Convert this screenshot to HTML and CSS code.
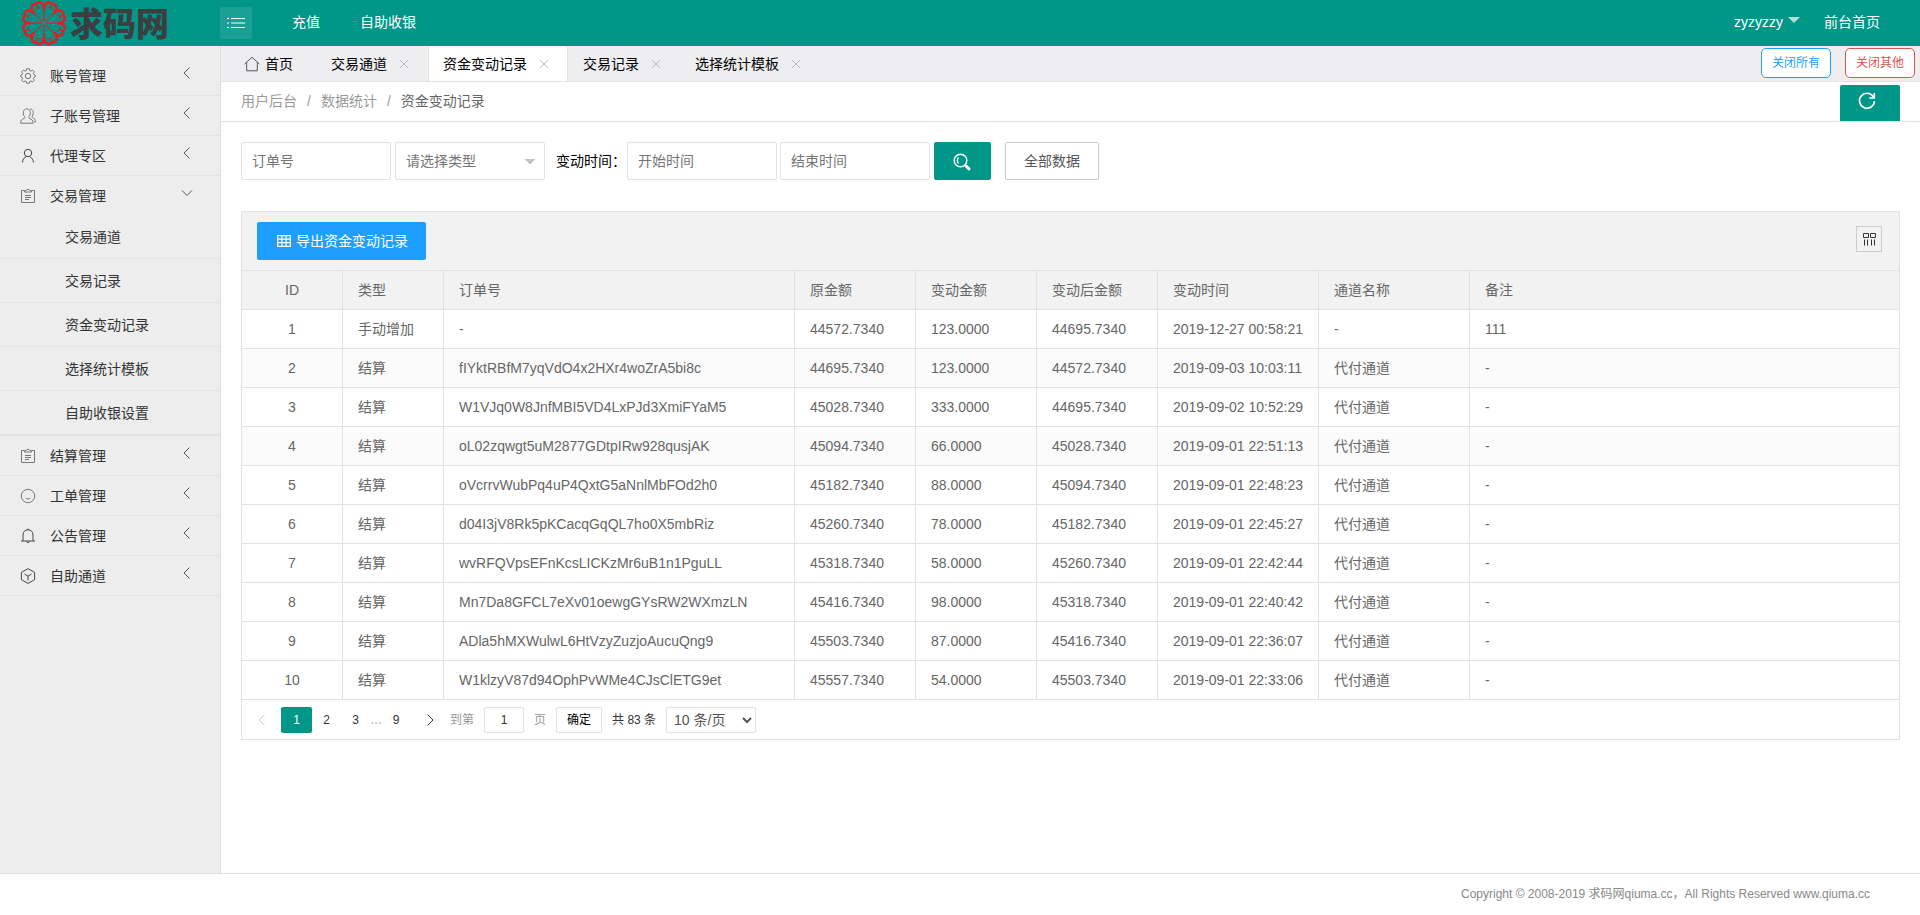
FILE: index.html
```
<!DOCTYPE html>
<html lang="zh-CN">
<head>
    <meta charset="UTF-8">
    <meta name="viewport" content="width=device-width, initial-scale=1.0">
    <title>资金变动记录</title>
    <link rel="stylesheet" href="styles.css">
</head>
<body>
    <svg class="sprite" aria-hidden="true">
        <symbol id="left" viewBox="0 0 14 14"><path d="M9.5 1.5L4 7l5.500 5.500"/></symbol>
        <symbol id="right" viewBox="0 0 14 14"><path d="M4.500 1.500L10 7l-5.500 5.500"/></symbol>
        <symbol id="down" viewBox="0 0 14 14"><path d="M2 4.500L7 9.500l5-5"/></symbol>
        <symbol id="close" viewBox="0 0 14 14"><path d="M3 3l8 8M11 3l-8 8"/></symbol>
        <symbol id="form" viewBox="0 0 16 16"><path d="M4 2.500H1.500v12h13v-12H12M4.500 4V2.500H6C6.300 1 9.700 1 10 2.500h1.500V4zM5 7.500h6M5 9.500h6M5 11.500h4"/></symbol>
        <symbol id="petal" viewBox="-9 -24 18 24" overflow="visible"><path d="M-4.800-12.500C-8-17-5.500-21.500-1.800-21.300Q-.6-21.200 0-20.500Q.6-21.200 1.800-21.300C5.500-21.500 8-17 4.800-12.500"/><path class="vein" d="M-4.800-12.500L-.8-2M4.800-12.500L.8-2"/><path class="curl" d="M0-20.500C.5-17-1-15-3-16.500M0-20.500C-.5-17 1-15 3-16.500"/></symbol>
    </svg>

    <header class="header">
        <a class="logo" href="#">
            <svg class="logo-flower" viewBox="-23 -23 46 46">
                <g transform="rotate(22.5)"><use href="#petal" x="-9" y="-24" width="18" height="24"/></g>
                <g transform="rotate(67.5)"><use href="#petal" x="-9" y="-24" width="18" height="24"/></g>
                <g transform="rotate(112.5)"><use href="#petal" x="-9" y="-24" width="18" height="24"/></g>
                <g transform="rotate(157.5)"><use href="#petal" x="-9" y="-24" width="18" height="24"/></g>
                <g transform="rotate(202.5)"><use href="#petal" x="-9" y="-24" width="18" height="24"/></g>
                <g transform="rotate(247.5)"><use href="#petal" x="-9" y="-24" width="18" height="24"/></g>
                <g transform="rotate(292.5)"><use href="#petal" x="-9" y="-24" width="18" height="24"/></g>
                <g transform="rotate(337.5)"><use href="#petal" x="-9" y="-24" width="18" height="24"/></g>
            </svg>
            <span>求码网</span>
        </a>
        <button class="menu-toggle" aria-label="菜单">
            <svg viewBox="0 0 18 12"><path d="M4 1.500h14M4 6h14M4 10.500h14M0 1.500h2M0 6h2M0 10.500h2"/></svg>
        </button>
        <nav class="top-nav">
            <a href="#">充值</a>
            <a href="#">自助收银</a>
        </nav>
        <nav class="user-nav">
            <a href="#">zyzyzzy <i class="caret"></i></a>
            <a href="#">前台首页</a>
        </nav>
    </header>

    <div class="wrapper">
        <!-- 左侧菜单 -->
        <aside class="side">
            <ul class="menu">
                <li><a class="menu-link" href="#">
                    <svg class="icon" viewBox="0 0 16 16"><circle cx="8" cy="8" r="2.700"/><path d="M6.700.7h2.600l.4 1.900 1.300.5 1.600-1 1.800 1.800-1 1.600.5 1.300 1.400.3v1.800l-1.400.4-.5 1.300 1 1.600-1.800 1.800-1.600-1-1.300.5-.4 1.800H6.700l-.4-1.800-1.300-.5-1.600 1-1.800-1.800 1-1.600-.5-1.300L.7 8.900V7.100l1.400-.3.5-1.300-1-1.600 1.800-1.800 1.600 1 1.300-.5z"/></svg>
                    账号管理<svg class="arrow"><use href="#left"/></svg></a></li>
                <li><a class="menu-link" href="#">
                    <svg class="icon" viewBox="0 0 16 16"><path d="M.6 15.200c0-3 1.200-4 3.900-4.900.6-.3.400-1.100 0-1.600C2.200 5.500 3.200.8 6.800.8s4.600 4.700 2.300 7.900c-.4.500-.6 1.300 0 1.600 2.700.9 3.900 1.900 3.900 4.900zM10 1c3.300 0 4.200 4.200 2.200 7.200-.4.600-.2 1 .4 1.300 2 .9 2.800 2.200 2.800 4.500h-1.200"/></svg>
                    子账号管理<svg class="arrow"><use href="#left"/></svg></a></li>
                <li><a class="menu-link" href="#">
                    <svg class="icon dark" viewBox="0 0 16 16"><circle cx="8" cy="5" r="3.700"/><path d="M2.500 14.500c.2-3.500 1.900-5.200 4-6M10 9c2 1 3.300 2.800 3.500 5.500"/></svg>
                    代理专区<svg class="arrow"><use href="#left"/></svg></a></li>
                <li class="open">
                    <a class="menu-link" href="#"><svg class="icon"><use href="#form"/></svg>交易管理<svg class="arrow"><use href="#down"/></svg></a>
                    <ul class="sub-menu">
                        <li><a href="#">交易通道</a></li>
                        <li><a href="#">交易记录</a></li>
                        <li><a href="#">资金变动记录</a></li>
                        <li><a href="#">选择统计模板</a></li>
                        <li><a href="#">自助收银设置</a></li>
                    </ul>
                </li>
                <li><a class="menu-link" href="#"><svg class="icon"><use href="#form"/></svg>结算管理<svg class="arrow"><use href="#left"/></svg></a></li>
                <li><a class="menu-link" href="#">
                    <svg class="icon" viewBox="0 0 16 16"><circle cx="8" cy="8" r="6.700"/><path d="M5.700 10.200c1.400 1 3.200 1 4.600 0"/></svg>
                    工单管理<svg class="arrow"><use href="#left"/></svg></a></li>
                <li><a class="menu-link" href="#">
                    <svg class="icon dark" viewBox="0 0 16 16"><path d="M1 13h14M3 13V7c0-3.300 2-5.200 5-5.200S13 3.700 13 7v6M6.500 13.300c.3 1.700 2.700 1.700 3 0M8 1.800V.6"/></svg>
                    公告管理<svg class="arrow"><use href="#left"/></svg></a></li>
                <li><a class="menu-link" href="#">
                    <svg class="icon dark" viewBox="0 0 16 16"><path d="M8 .7l6.600 3.700v7.400L8 15.400l-6.600-3.600V4.400zM4.500 6L8 8.200 11.500 6M8 8.200v4.300"/></svg>
                    自助通道<svg class="arrow"><use href="#left"/></svg></a></li>
            </ul>
        </aside>

        <main class="main">
            <!-- 标签页 -->
            <div class="tabs">
                <a class="tab home" href="#"><svg viewBox="0 0 16 16"><path d="M.7 8L8 1.200 15.300 8M2.700 6.500v8.300h10.600V6.500"/></svg>首页</a>
                <a class="tab" href="#">交易通道<svg><use href="#close"/></svg></a>
                <a class="tab active" href="#">资金变动记录<svg><use href="#close"/></svg></a>
                <a class="tab" href="#">交易记录<svg><use href="#close"/></svg></a>
                <a class="tab" href="#">选择统计模板<svg><use href="#close"/></svg></a>
                <div class="tab-tools">
                    <button class="close-all">关闭所有</button>
                    <button class="close-other">关闭其他</button>
                </div>
            </div>

            <div class="crumb-bar">
                <nav class="crumb">
                    <a href="#">用户后台</a><span>/</span><a href="#">数据统计</a><span>/</span><a class="current" href="#">资金变动记录</a>
                </nav>
                <button class="refresh" aria-label="刷新">
                    <svg viewBox="0 0 18 18"><path d="M15.500 5A7.500 7.500 0 1 0 16.500 9M16.300 1v5h-5"/></svg>
                </button>
            </div>

            <div class="content">
                <form class="search">
                    <input type="text" placeholder="订单号" aria-label="订单号">
                    <select class="type-select" aria-label="类型">
                        <option>请选择类型</option>
                    </select>
                    <label for="start">变动时间：</label>
                    <input type="text" id="start" placeholder="开始时间">
                    <input type="text" placeholder="结束时间" aria-label="结束时间">
                    <button class="search-btn" type="button" aria-label="搜索">
                        <svg viewBox="0 0 18 18"><circle cx="7.500" cy="7.500" r="6.300"/><path d="M5.500 4.500C4 6 4 9 5.500 10.500"/><path class="handle" d="M12.500 12.500l3.500 3.300"/></svg>
                    </button>
                    <button class="all-btn" type="button">全部数据</button>
                </form>

                <div class="table-box">
                    <div class="toolbar">
                        <button class="export-btn">
                            <svg viewBox="0 0 14 12"><path d="M.7.7h12.600v10.600H.7zM.7 4.200h12.600M.7 7.700h12.600M4.900.7v10.600M9.100.7v10.600"/></svg>导出资金变动记录
                        </button>
                        <button class="cols-btn" aria-label="筛选列">
                            <svg viewBox="0 0 14 14"><path d="M1.500 1.500h5v4h-5zM8.500 1.500h5v4h-5z"/><path d="M2.500 7.500v6M5.500 7.500v6M9.500 7.500v6M12.500 7.500v6"/></svg>
                        </button>
                    </div>
                    <table class="data">
                        <colgroup>
                            <col class="w-id"><col class="w-id"><col class="w-order"><col class="w-money"><col class="w-money"><col class="w-money"><col class="w-time"><col class="w-name"><col>
                        </colgroup>
                        <thead>
                            <tr><th>ID</th><th>类型</th><th>订单号</th><th>原金额</th><th>变动金额</th><th>变动后金额</th><th>变动时间</th><th>通道名称</th><th>备注</th></tr>
                        </thead>
                        <tbody>
                            <tr><td>1</td><td>手动增加</td><td>-</td><td>44572.7340</td><td>123.0000</td><td>44695.7340</td><td>2019-12-27 00:58:21</td><td>-</td><td>111</td></tr>
                            <tr><td>2</td><td>结算</td><td>fIYktRBfM7yqVdO4x2HXr4woZrA5bi8c</td><td>44695.7340</td><td>123.0000</td><td>44572.7340</td><td>2019-09-03 10:03:11</td><td>代付通道</td><td>-</td></tr>
                            <tr><td>3</td><td>结算</td><td>W1VJq0W8JnfMBI5VD4LxPJd3XmiFYaM5</td><td>45028.7340</td><td>333.0000</td><td>44695.7340</td><td>2019-09-02 10:52:29</td><td>代付通道</td><td>-</td></tr>
                            <tr><td>4</td><td>结算</td><td>oL02zqwgt5uM2877GDtpIRw928qusjAK</td><td>45094.7340</td><td>66.0000</td><td>45028.7340</td><td>2019-09-01 22:51:13</td><td>代付通道</td><td>-</td></tr>
                            <tr><td>5</td><td>结算</td><td>oVcrrvWubPq4uP4QxtG5aNnlMbFOd2h0</td><td>45182.7340</td><td>88.0000</td><td>45094.7340</td><td>2019-09-01 22:48:23</td><td>代付通道</td><td>-</td></tr>
                            <tr><td>6</td><td>结算</td><td>d04I3jV8Rk5pKCacqGqQL7ho0X5mbRiz</td><td>45260.7340</td><td>78.0000</td><td>45182.7340</td><td>2019-09-01 22:45:27</td><td>代付通道</td><td>-</td></tr>
                            <tr><td>7</td><td>结算</td><td>wvRFQVpsEFnKcsLICKzMr6uB1n1PguLL</td><td>45318.7340</td><td>58.0000</td><td>45260.7340</td><td>2019-09-01 22:42:44</td><td>代付通道</td><td>-</td></tr>
                            <tr><td>8</td><td>结算</td><td>Mn7Da8GFCL7eXv01oewgGYsRW2WXmzLN</td><td>45416.7340</td><td>98.0000</td><td>45318.7340</td><td>2019-09-01 22:40:42</td><td>代付通道</td><td>-</td></tr>
                            <tr><td>9</td><td>结算</td><td>ADla5hMXWulwL6HtVzyZuzjoAucuQng9</td><td>45503.7340</td><td>87.0000</td><td>45416.7340</td><td>2019-09-01 22:36:07</td><td>代付通道</td><td>-</td></tr>
                            <tr><td>10</td><td>结算</td><td>W1klzyV87d94OphPvWMe4CJsClETG9et</td><td>45557.7340</td><td>54.0000</td><td>45503.7340</td><td>2019-09-01 22:33:06</td><td>代付通道</td><td>-</td></tr>
                        </tbody>
                    </table>
                    <!-- 分页 -->
                    <div class="pager">
                        <a class="prev" href="#" aria-label="上一页"><svg><use href="#left"/></svg></a>
                        <a class="on" href="#">1</a>
                        <a href="#">2</a>
                        <a href="#">3</a>
                        <span class="dots">…</span>
                        <a class="last" href="#">9</a>
                        <a class="next" href="#" aria-label="下一页"><svg><use href="#right"/></svg></a>
                        <label for="page">到第</label>
                        <input type="text" id="page" value="1">
                        <label for="page">页</label>
                        <button>确定</button>
                        <span class="count">共 83 条</span>
                        <select aria-label="每页条数">
                            <option>10 条/页</option>
                        </select>
                    </div>
                </div>
            </div>
        </main>
    </div>

    <footer class="footer">Copyright © 2008-2019 求码网qiuma.cc，All Rights Reserved www.qiuma.cc</footer>
</body>
</html>
```
FILE: styles.css
```
* {
    box-sizing: border-box;
}
body {
    margin: 0;
    min-height: 100vh;
    display: flex;
    flex-direction: column;
    font: 14px/24px "Liberation Sans", "Noto Sans CJK SC", sans-serif;
    color: #000;
    background: #fff;
}
a {
    color: inherit;
    text-decoration: none;
}
ul {
    list-style: none;
    margin: 0;
    padding: 0;
}
button, input, select {
    font: inherit;
    color: inherit;
    margin: 0;
    border-radius: 2px;
}
button {
    border: none;
    cursor: pointer;
}
svg {
    fill: none;
    stroke: currentColor;
    flex: none;
}
.sprite {
    display: none;
}

/* 顶部 */
.header {
    height: 46px;
    display: flex;
    align-items: center;
    background: #009688;
    color: #fff;
}
.logo {
    width: 220px;
    padding-left: 21px;
    display: flex;
    align-items: center;
    gap: 3px;
    color: #3a3f42;
    font: 900 33px/46px "Noto Sans CJK SC", sans-serif;
}
.logo span {
    padding-bottom: 2px;
}
.logo-flower {
    width: 46px;
    height: 46px;
    color: #d8232a;
    stroke-width: 2.6;
}
.vein {
    stroke-width: .8;
}
.curl {
    stroke-width: .9;
}
.menu-toggle {
    width: 32px;
    height: 32px;
    padding: 0;
    display: flex;
    align-items: center;
    justify-content: center;
    color: #fff;
    background: rgba(255, 255, 255, .1);
}
.menu-toggle svg {
    width: 18px;
    height: 12px;
}
.top-nav {
    display: flex;
    gap: 40px;
    padding: 0 0 2px 40px;
}
.user-nav {
    display: flex;
    gap: 24px;
    margin-left: auto;
    padding: 0 40px 2px 0;
}
.user-nav a {
    display: flex;
    align-items: center;
}
.caret {
    margin: 0 0 4px 5px;
    border: 6px solid transparent;
    border-top-color: rgba(255, 255, 255, .7);
    border-bottom: none;
}

.wrapper {
    flex: 1;
    display: flex;
}

/* 左侧菜单 */
.side {
    width: 221px;
    flex: none;
    padding-top: 10px;
    background: #ededed;
    border-right: 1px solid #ddd;
    color: #333;
}
.menu > li {
    border-bottom: 1px solid #e3e3e3;
}
.menu-link {
    height: 39px;
    display: flex;
    align-items: center;
    gap: 14px;
    padding: 0 26px 0 20px;
}
.icon {
    width: 16px;
    height: 16px;
    color: #777;
}
.icon.dark {
    color: #444;
}
.arrow {
    width: 14px;
    height: 14px;
    margin: 0 0 6px auto;
    color: #555;
}
.sub-menu li {
    height: 44px;
    padding-left: 65px;
    line-height: 45px;
    border-bottom: 1px solid #e3e3e3;
}

/* 标签页 */
.main {
    flex: 1;
    min-width: 0;
}
.tabs {
    height: 36px;
    display: flex;
    align-items: center;
    background: #eeeef0;
    border-bottom: 1px solid #e2e2e2;
}
.tab {
    height: 34px;
    display: flex;
    align-items: center;
    gap: 10px;
    padding: 0 16px 0 14px;
    border: solid transparent;
    border-width: 0 1px;
}
.tab svg {
    width: 14px;
    height: 14px;
    color: #bbb;
}
.tab.home {
    gap: 5px;
    padding: 0 22px;
}
.tab.home svg {
    width: 16px;
    height: 16px;
    color: #555;
}
.tab.active {
    background: #fff;
    border-color: #e2e2e2;
}
.tab-tools {
    display: flex;
    gap: 14px;
    margin-left: auto;
    padding: 0 5px 1px 0;
}
.tab-tools button {
    width: 70px;
    height: 30px;
    padding: 0;
    font-size: 12px;
    background: #fff;
    border: 1px solid;
    border-radius: 5px;
}
.close-all {
    color: #1e9fff;
}
.close-other {
    color: #d9534f;
}
.crumb-bar {
    height: 40px;
    display: flex;
    justify-content: space-between;
    padding: 0 20px;
    border-bottom: 1px solid #e2e2e2;
}
.crumb {
    line-height: 38px;
    color: #999;
}
.crumb span {
    margin: 0 10px;
}
.crumb .current {
    color: #666;
}
.refresh {
    width: 60px;
    height: 36px;
    align-self: flex-end;
    padding: 0 6px 6px 0;
    background: #009688;
    color: #fff;
    border-radius: 2px 2px 0 0;
}
.refresh svg {
    width: 18px;
    height: 18px;
    stroke-width: 1.6;
    vertical-align: middle;
}

/* 搜索 */
.content {
    padding: 20px;
}
.search {
    display: flex;
    align-items: center;
    gap: 3px;
    padding-bottom: 31px;
}
.search input, .type-select {
    width: 150px;
    height: 38px;
    padding: 0 10px;
    border: 1px solid #e2e2e2;
    background: #fff;
}
.search input::placeholder {
    color: #757575;
}
.search .type-select {
    appearance: none;
    color: #757575;
    margin-left: 1px;
    background: linear-gradient(to bottom right, #c2c2c2 50%, transparent 50%) 134px 16px / 6px 6px no-repeat,
        linear-gradient(to bottom left, #c2c2c2 50%, transparent 50%) 128px 16px / 6px 6px no-repeat, #fff;
}
.search label {
    width: 76px;
    padding-left: 8px;
    white-space: nowrap;
}
.search-btn {
    width: 57px;
    height: 38px;
    padding: 0 2px 0 0;
    margin-left: 1px;
    color: #fff;
    background: #009688;
}
.search-btn svg {
    width: 18px;
    height: 18px;
    stroke-width: 1.4;
    vertical-align: middle;
}
.search-btn .handle {
    stroke-width: 3;
    stroke-linecap: round;
}
.all-btn {
    height: 38px;
    margin-left: 11px;
    padding: 0 18px;
    color: #555;
    background: #fff;
    border: 1px solid #c9c9c9;
}

/* 表格 */
.table-box {
    border: 1px solid #e2e2e2;
    color: #666;
}
.toolbar {
    height: 59px;
    display: flex;
    justify-content: space-between;
    align-items: center;
    padding: 0 17px 0 15px;
    background: #f2f2f2;
    border-bottom: 1px solid #e2e2e2;
}
.export-btn {
    height: 38px;
    display: flex;
    align-items: center;
    gap: 5px;
    padding: 0 18px 0 20px;
    color: #fff;
    background: #1e9fff;
}
.export-btn svg {
    width: 14px;
    height: 12px;
    stroke-width: 1.2;
}
.cols-btn {
    width: 26px;
    height: 26px;
    padding: 0;
    margin-bottom: 4px;
    display: flex;
    align-items: center;
    justify-content: center;
    color: #333;
    background: none;
    border: 1px solid #ccc;
    border-radius: 0;
}
.cols-btn svg {
    width: 14px;
    height: 14px;
}
.data {
    width: 100%;
    table-layout: fixed;
    border-spacing: 0;
}
.w-id {
    width: 101px;
}
.w-order {
    width: 351px;
}
.w-money {
    width: 121px;
}
.w-time {
    width: 161px;
}
.w-name {
    width: 151px;
}
.data th, .data td {
    height: 39px;
    padding: 0 15px;
    line-height: 28px;
    font-weight: normal;
    text-align: left;
    white-space: nowrap;
    border: solid #e2e2e2;
    border-width: 0 1px 1px 0;
}
.data th {
    background: #f2f2f2;
}
.data th:first-child, .data td:first-child {
    text-align: center;
}
.data th:last-child, .data td:last-child {
    border-right: none;
}
.data tbody tr:nth-child(2), .data tbody tr:nth-child(4) {
    background: #fbfbfb;
}

/* 分页 */
.pager {
    height: 39px;
    display: flex;
    align-items: center;
    padding: 0 7px;
    font-size: 12px;
    color: #333;
}
.pager a {
    width: 29px;
    line-height: 26px;
    text-align: center;
}
.pager a.on {
    width: 31px;
    margin-left: 6px;
    color: #fff;
    background: #009688;
    border-radius: 2px;
}
.pager a svg {
    width: 14px;
    height: 14px;
    vertical-align: middle;
}
.pager .prev {
    width: 26px;
    color: #ccc;
}
.pager .dots {
    width: 12px;
    text-align: center;
    color: #999;
}
.pager .last {
    width: 28px;
}
.pager .next {
    width: 40px;
}
.pager label {
    color: #999;
}
.pager input {
    width: 40px;
    height: 26px;
    margin: 0 10px;
    padding: 0;
    text-align: center;
    border: 1px solid #e2e2e2;
}
.pager button {
    height: 26px;
    margin: 0 10px;
    padding: 0 10px;
    color: #000;
    background: #fff;
    border: 1px solid #e2e2e2;
}
.pager select {
    width: 90px;
    height: 26px;
    margin-left: 10px;
    padding: 0 3px;
    font-size: 14px;
    line-height: 20px;
    color: #555;
    background: #fff;
    border: 1px solid #e2e2e2;
}

.footer {
    height: 42px;
    padding-right: 50px;
    line-height: 40px;
    text-align: right;
    font-size: 12px;
    color: #888;
    border-top: 1px solid #ddd;
}
```
